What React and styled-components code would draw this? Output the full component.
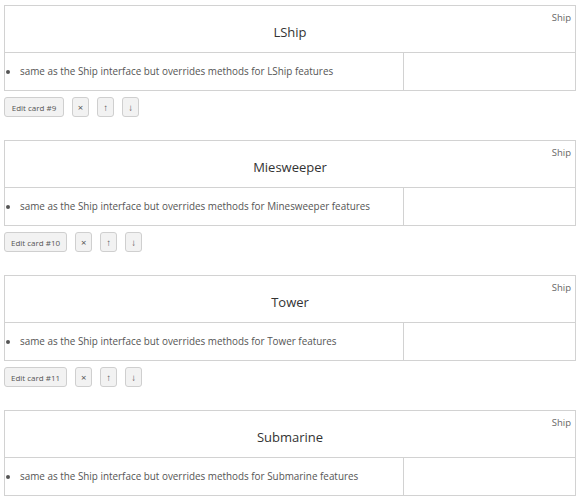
import React from 'react';
import styled, { createGlobalStyle } from 'styled-components';

const GlobalStyle = createGlobalStyle`
  html, body {
    margin: 0;
    padding: 0;
    background: #fff;
  }
  body {
    font-family: "Open Sans", "Liberation Sans", sans-serif;
    color: #444;
  }
`;

const Page = styled.div`
  padding: 5px 8px 0 4px;
  display: flex;
  flex-direction: column;
  gap: 23px;
`;

const Entry = styled.section`
  display: flex;
  flex-direction: column;
  gap: 6px;
`;

const Card = styled.div`
  border: 1px solid #d2d2d2;
  background: #fff;
`;

const Header = styled.div`
  height: 47px;
  border-bottom: 1px solid #d2d2d2;
  display: flex;
  flex-direction: column;
  padding: 5px 4px 0;
  box-sizing: border-box;
`;

const TypeLabel = styled.div`
  align-self: flex-end;
  font-size: 9.5px;
  line-height: 13px;
  color: #666;
`;

const Title = styled.h2`
  margin: 0;
  text-align: center;
  font-size: 13px;
  line-height: 17px;
  font-weight: 400;
  color: #333;
`;

const Body = styled.div`
  display: grid;
  grid-template-columns: 398px 1fr;
  height: 37px;
`;

const Cell = styled.div`
  display: flex;
  align-items: center;
  & + & {
    border-left: 1px solid #d2d2d2;
  }
`;

const List = styled.ul`
  margin: 0;
  padding-left: 15px;
  font-size: 9.9px;
  line-height: 13px;
  color: #555;
`;

const Toolbar = styled.div`
  display: flex;
  gap: 8px;
`;

const Button = styled.button`
  height: 20px;
  min-width: ${p => (p.$wide ? '60px' : '17px')};
  padding: 0 ${p => (p.$wide ? '6px' : '0')};
  box-sizing: border-box;
  border: 1px solid #cfcfcf;
  border-radius: 3px;
  background: #f2f2f2;
  font-family: inherit;
  font-size: ${p => (p.$wide ? '8px' : '9.5px')};
  color: #555;
  cursor: pointer;
  display: flex;
  align-items: center;
  justify-content: center;
`;

const cards = [
  { id: 9, name: 'LShip', feature: 'LShip' },
  { id: 10, name: 'Miesweeper', feature: 'Minesweeper' },
  { id: 11, name: 'Tower', feature: 'Tower' },
  { id: 12, name: 'Submarine', feature: 'Submarine' },
];

const App = () => (
  <>
    <GlobalStyle />
    <Page>
      {cards.map(card => (
        <Entry key={card.id}>
          <Card>
            <Header>
              <TypeLabel>Ship</TypeLabel>
              <Title>{card.name}</Title>
            </Header>
            <Body>
              <Cell>
                <List>
                  <li>same as the Ship interface but overrides methods for {card.feature} features</li>
                </List>
              </Cell>
              <Cell />
            </Body>
          </Card>
          <Toolbar>
            <Button $wide>Edit card #{card.id}</Button>
            <Button>×</Button>
            <Button>↑</Button>
            <Button>↓</Button>
          </Toolbar>
        </Entry>
      ))}
    </Page>
  </>
);

export default App;
